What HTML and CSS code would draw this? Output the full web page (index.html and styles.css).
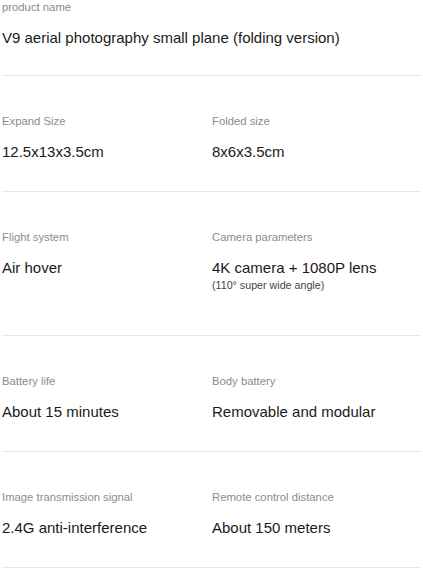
FILE: index.html
```html
<!DOCTYPE html>
<html lang="en">
<head>
<meta charset="utf-8">
<title>Specs</title>
<link rel="stylesheet" href="styles.css">
</head>
<body>
<div class="specs">
  <div class="row row-first">
    <div class="cell">
      <div class="label">product name</div>
      <div class="value">V9 aerial photography small plane (folding version)</div>
    </div>
  </div>
  <div class="row">
    <div class="cell">
      <div class="label">Expand Size</div>
      <div class="value">12.5x13x3.5cm</div>
    </div>
    <div class="cell">
      <div class="label">Folded size</div>
      <div class="value">8x6x3.5cm</div>
    </div>
  </div>
  <div class="row row-tall">
    <div class="cell">
      <div class="label">Flight system</div>
      <div class="value">Air hover</div>
    </div>
    <div class="cell">
      <div class="label">Camera parameters</div>
      <div class="value">4K camera + 1080P lens</div>
      <div class="sub">(110° super wide angle)</div>
    </div>
  </div>
  <div class="row">
    <div class="cell">
      <div class="label">Battery life</div>
      <div class="value">About 15 minutes</div>
    </div>
    <div class="cell">
      <div class="label">Body battery</div>
      <div class="value">Removable and modular</div>
    </div>
  </div>
  <div class="row">
    <div class="cell">
      <div class="label">Image transmission signal</div>
      <div class="value">2.4G anti-interference</div>
    </div>
    <div class="cell">
      <div class="label">Remote control distance</div>
      <div class="value">About 150 meters</div>
    </div>
  </div>
</div>
</body>
</html>
```

FILE: styles.css
```css
html, body {
  margin: 0;
  padding: 0;
  background: #ffffff;
}
body {
  font-family: "Liberation Sans", Arial, sans-serif;
  padding: 0 2px;
}
.specs {
  display: flex;
  flex-direction: column;
}
.row {
  display: grid;
  grid-template-columns: 210px 1fr;
  padding: 38px 0 29px;
  border-bottom: 1px solid #e6e6e6;
}
.row-first {
  grid-template-columns: 1fr;
  padding: 0 0 27px;
}
.row-tall {
  padding-bottom: 43px;
}
.cell {
  display: flex;
  flex-direction: column;
}
.label {
  font-size: 11.3px;
  line-height: 14px;
  color: #8c8c8c;
  margin-bottom: 14px;
}
.value {
  font-size: 15px;
  line-height: 20px;
  color: #1a1a1a;
}
.sub {
  font-size: 10.7px;
  line-height: 14px;
  color: #444;
}
```
